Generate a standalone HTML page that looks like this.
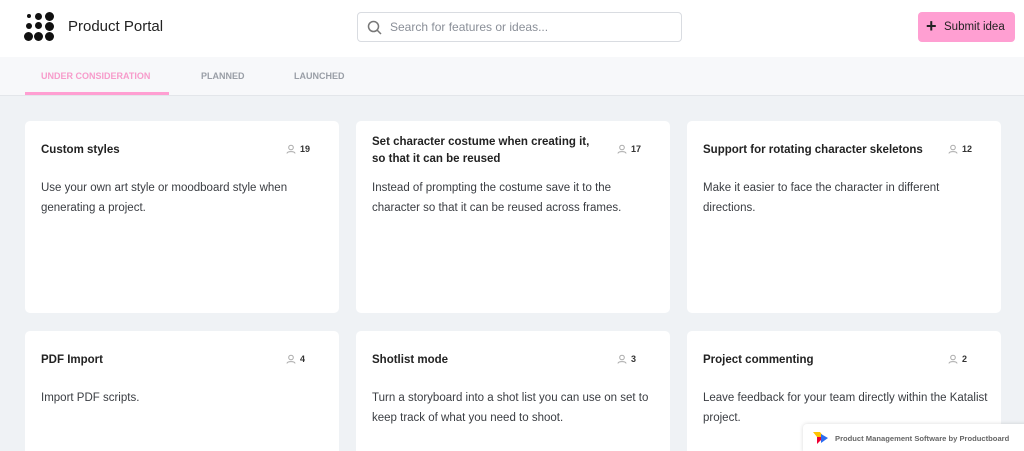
<!DOCTYPE html>
<html><head><meta charset="utf-8"><style>
*{box-sizing:border-box;margin:0;padding:0}
html,body{width:1024px;height:451px;overflow:hidden}
body{background:#eff2f5;font-family:"Liberation Sans",sans-serif;position:relative;color:#222}
.hdr{position:absolute;left:0;top:0;width:1024px;height:57px;background:#fff}
.dot{position:absolute;background:#111;border-radius:50%}
.title{position:absolute;left:68px;top:18px;font-size:15px;color:#222}
.search{position:absolute;left:357px;top:12px;width:325px;height:30px;border:1px solid #d9dce1;border-radius:4px;background:#fff}
.search span{position:absolute;left:32px;top:7px;font-size:12px;color:#8a8f98}
.btn{position:absolute;left:918px;top:12px;width:97px;height:30px;background:#ff9fd2;border-radius:4px;font-size:11.5px;color:#222}
.btn b{position:absolute;left:8px;top:4px;font-size:18px;font-weight:bold}
.btn span{position:absolute;left:26px;top:9px}
.tabs{position:absolute;left:0;top:57px;width:1024px;height:39px;background:#f7f8fa;border-bottom:1px solid #e3e6ea}
.tab{position:absolute;top:14px;font-size:9px;font-weight:bold;color:#999ea6}
.ul{position:absolute;left:25px;top:35px;width:144px;height:3px;background:#ff9fd2}
.card{position:absolute;width:314px;background:#fff;border-radius:5px;overflow:hidden}
.card h3{position:absolute;left:16px;top:21px;width:230px;font-size:11.5px;font-weight:bold;line-height:17px;color:#222}
.card .v{position:absolute;left:275px;top:23px;font-size:9px;font-weight:bold;color:#333}
.card .v svg{position:absolute;left:-14px;top:0}
.card p{position:absolute;left:16px;top:57px;width:285px;font-size:11.5px;line-height:20px;color:#3a3d42}
.badge{position:absolute;left:803px;top:424px;width:230px;height:30px;background:#fff;border-radius:4px;box-shadow:0 0 4px rgba(0,0,0,.15);font-size:7.6px;font-weight:bold;color:#666}
</style></head><body>
<div class="hdr">
<div class="dot" style="left:27px;top:14px;width:4px;height:4px"></div>
<div class="dot" style="left:35px;top:13px;width:7px;height:7px"></div>
<div class="dot" style="left:45px;top:12px;width:9px;height:9px"></div>
<div class="dot" style="left:26px;top:23px;width:6px;height:6px"></div>
<div class="dot" style="left:35px;top:22px;width:7px;height:7px"></div>
<div class="dot" style="left:45px;top:22px;width:9px;height:9px"></div>
<div class="dot" style="left:24px;top:32px;width:9px;height:9px"></div>
<div class="dot" style="left:34px;top:32px;width:9px;height:9px"></div>
<div class="dot" style="left:45px;top:32px;width:9px;height:9px"></div>
<div class="title">Product Portal</div>
<div class="search"><svg style="position:absolute;left:9px;top:7px" width="15" height="15" viewBox="0 0 15 15"><circle cx="6.5" cy="6.5" r="5" fill="none" stroke="#777" stroke-width="1.5"/><path d="M10 10l4 4" stroke="#777" stroke-width="1.5"/></svg><span>Search for features or ideas...</span></div>
<div class="btn"><b>+</b><span>Submit idea</span></div>
</div>
<div class="tabs">
<div class="tab" style="left:41px;color:#f79bcb">UNDER CONSIDERATION</div>
<div class="tab" style="left:201px">PLANNED</div>
<div class="tab" style="left:294px">LAUNCHED</div>
<div class="ul"></div>
</div>
<div class="card" style="left:25px;top:121px;height:192px"><h3>Custom styles</h3><div class="v"><svg width="10" height="10" viewBox="0 0 10 10"><circle cx="5" cy="3.5" r="2.3" fill="none" stroke="#aaa"/><path d="M1 9.5c0-2.5 8-2.5 8 0" fill="none" stroke="#aaa"/></svg>19</div><p>Use your own art style or moodboard style when generating a project.</p></div>
<div class="card" style="left:356px;top:121px;height:192px"><h3 style="top:13px">Set character costume when creating it, so that it can be reused</h3><div class="v"><svg width="10" height="10" viewBox="0 0 10 10"><circle cx="5" cy="3.5" r="2.3" fill="none" stroke="#aaa"/><path d="M1 9.5c0-2.5 8-2.5 8 0" fill="none" stroke="#aaa"/></svg>17</div><p>Instead of prompting the costume save it to the character so that it can be reused across frames.</p></div>
<div class="card" style="left:687px;top:121px;height:192px"><h3>Support for rotating character skeletons</h3><div class="v"><svg width="10" height="10" viewBox="0 0 10 10"><circle cx="5" cy="3.5" r="2.3" fill="none" stroke="#aaa"/><path d="M1 9.5c0-2.5 8-2.5 8 0" fill="none" stroke="#aaa"/></svg>12</div><p>Make it easier to face the character in different directions.</p></div>
<div class="card" style="left:25px;top:331px;height:140px"><h3>PDF Import</h3><div class="v"><svg width="10" height="10" viewBox="0 0 10 10"><circle cx="5" cy="3.5" r="2.3" fill="none" stroke="#aaa"/><path d="M1 9.5c0-2.5 8-2.5 8 0" fill="none" stroke="#aaa"/></svg>4</div><p>Import PDF scripts.</p></div>
<div class="card" style="left:356px;top:331px;height:140px"><h3>Shotlist mode</h3><div class="v"><svg width="10" height="10" viewBox="0 0 10 10"><circle cx="5" cy="3.5" r="2.3" fill="none" stroke="#aaa"/><path d="M1 9.5c0-2.5 8-2.5 8 0" fill="none" stroke="#aaa"/></svg>3</div><p>Turn a storyboard into a shot list you can use on set to keep track of what you need to shoot.</p></div>
<div class="card" style="left:687px;top:331px;height:140px"><h3>Project commenting</h3><div class="v"><svg width="10" height="10" viewBox="0 0 10 10"><circle cx="5" cy="3.5" r="2.3" fill="none" stroke="#aaa"/><path d="M1 9.5c0-2.5 8-2.5 8 0" fill="none" stroke="#aaa"/></svg>2</div><p>Leave feedback for your team directly within the Katalist project.</p></div>
<div class="badge"><svg style="position:absolute;left:10px;top:8px" width="16" height="12" viewBox="0 0 16 12"><path d="M0 0h7l4 5H4z" fill="#ffc300"/><path d="M4 5h7l-7 7z" fill="#e03"/><path d="M8 2l7 4-7 5z" fill="#2b6cf0"/></svg><span style="position:absolute;left:32px;top:10px">Product Management Software by Productboard</span></div>
</body></html>
